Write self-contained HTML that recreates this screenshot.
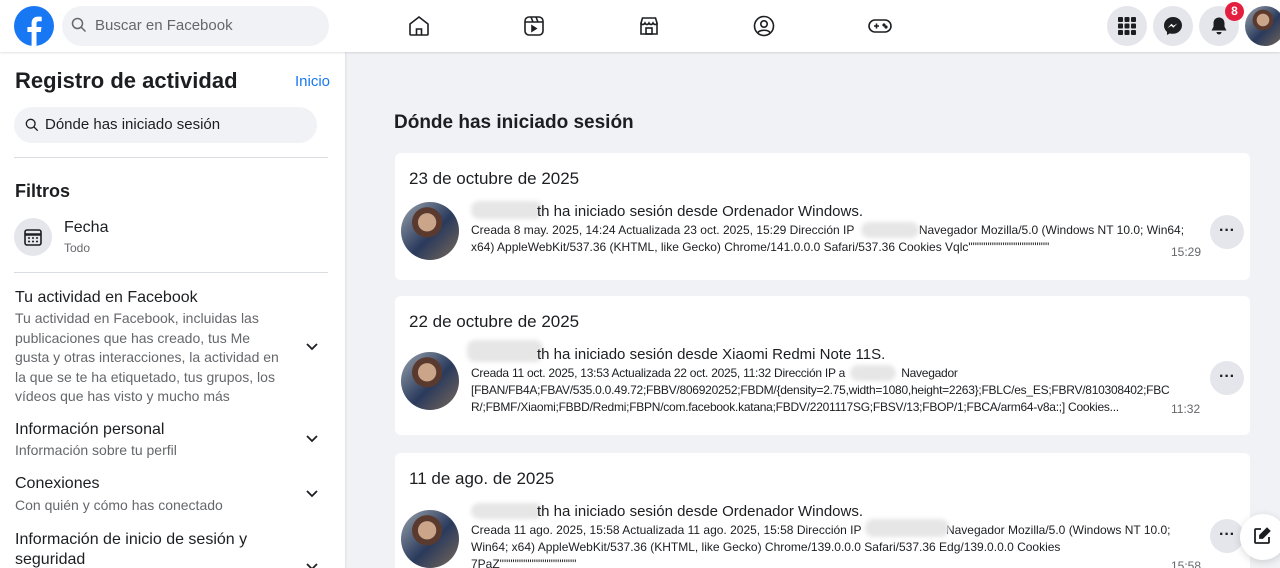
<!DOCTYPE html>
<html style="overflow:hidden;height:568px"><head><meta charset="utf-8"><style>
*{box-sizing:border-box;margin:0;padding:0}
body{width:1280px;height:568px;overflow:hidden;background:#f0f2f5;font-family:"Liberation Sans",sans-serif;color:#1c1e21;position:relative}
.a{position:absolute}
.hdr{left:0;top:0;width:1280px;height:52px;background:#fff;box-shadow:0 1px 2px rgba(0,0,0,.12);z-index:2}
.side{left:0;top:52px;width:345px;height:516px;background:#fff;box-shadow:1px 0 2px rgba(0,0,0,.08)}
.circ{border-radius:50%;background:#e4e6eb}
.card{left:395px;width:855px;background:#fff;border-radius:6px}
.av{width:58px;height:58px;border-radius:50%;background:radial-gradient(circle at 45% 35%,#caa58a 0 18%,#5a3a2e 19% 30%,transparent 31%),linear-gradient(135deg,#9aa3ad,#2a3a5c 55%,#7a6a5a);}
.blur{background:#e6e6e6;border-radius:8px;filter:blur(2px)}
.t{font-size:15px;white-space:nowrap}
.s{font-size:12px;color:#1c1e21;line-height:17px;white-space:nowrap}
.tm{font-size:12px;color:#65676b}
.dots{width:34px;height:34px;border-radius:50%;background:#e4e6eb;font-size:16px;font-weight:bold;text-align:center;line-height:32px;color:#1c1e21}
.h{font-size:16px}
.g{font-size:14px;color:#65676b;line-height:19.5px}
</style></head><body>
<div class="a hdr">
 <svg class="a" style="left:14px;top:6px" width="40" height="40" viewBox="0 0 40 40"><circle cx="20" cy="20" r="20" fill="#1877f2"/><path d="M22.5 40V26h4.3l.7-5h-5v-3.2c0-1.5.5-2.5 2.6-2.5h2.6v-4.5c-.5-.1-2-.2-3.8-.2-3.8 0-6.3 2.3-6.3 6.5V21h-4.2v5h4.2v14z" fill="#fff"/></svg>
 <div class="a" style="left:62px;top:6px;width:267px;height:40px;border-radius:20px;background:#f0f2f5"></div>
 <svg class="a" style="left:71px;top:17px" width="16" height="16" viewBox="0 0 16 16"><circle cx="6.5" cy="6.5" r="5" fill="none" stroke="#65676b" stroke-width="1.5"/><path d="M10 10l4.5 4.5" stroke="#65676b" stroke-width="1.5"/></svg>
 <div class="a" style="left:95px;top:17px;font-size:15px;color:#65676b">Buscar en Facebook</div>
 <svg class="a" style="left:407px;top:14px" width="24" height="24" viewBox="0 0 24 24" fill="none" stroke="#1c1e21" stroke-width="1.6"><path d="M3 10l9-7 9 7v10a1 1 0 0 1-1 1H4a1 1 0 0 1-1-1z"/><path d="M9.5 21v-6h5v6"/></svg>
 <svg class="a" style="left:522px;top:14px" width="24" height="24" viewBox="0 0 24 24" fill="none" stroke="#1c1e21" stroke-width="1.6"><rect x="3" y="3" width="18" height="18" rx="4"/><path d="M3 8h18M9 3l2 5M14 3l2 5"/><path d="M10 12v5l4-2.5z" fill="#1c1e21"/></svg>
 <svg class="a" style="left:637px;top:14px" width="24" height="24" viewBox="0 0 24 24" fill="none" stroke="#1c1e21" stroke-width="1.6"><path d="M4 9l1.5-5h13L20 9v11H4z"/><path d="M4 9c0 2 3 2 4 0 1 2 3 2 4 0 1 2 3 2 4 0 1 2 4 2 4 0"/><rect x="9" y="14" width="6" height="6"/></svg>
 <svg class="a" style="left:752px;top:14px" width="24" height="24" viewBox="0 0 24 24" fill="none" stroke="#1c1e21" stroke-width="1.6"><circle cx="12" cy="12" r="9.5"/><circle cx="12" cy="10" r="3.2"/><path d="M6 18.5c2-3 10-3 12 0"/></svg>
 <svg class="a" style="left:867px;top:14px" width="26" height="24" viewBox="0 0 26 24" fill="none" stroke="#1c1e21" stroke-width="1.6"><rect x="2" y="6" width="22" height="12" rx="6"/><path d="M7 12h5M9.5 9.5v5"/><circle cx="17" cy="11" r=".8" fill="#1c1e21"/><circle cx="19" cy="13" r=".8" fill="#1c1e21"/></svg>
 <div class="a circ" style="left:1107px;top:6px;width:40px;height:40px"></div>
 <svg class="a" style="left:1117px;top:16px" width="20" height="20" viewBox="0 0 20 20" fill="#1c1e21"><rect x="1" y="1" width="5" height="5" rx="1"/><rect x="7.5" y="1" width="5" height="5" rx="1"/><rect x="14" y="1" width="5" height="5" rx="1"/><rect x="1" y="7.5" width="5" height="5" rx="1"/><rect x="7.5" y="7.5" width="5" height="5" rx="1"/><rect x="14" y="7.5" width="5" height="5" rx="1"/><rect x="1" y="14" width="5" height="5" rx="1"/><rect x="7.5" y="14" width="5" height="5" rx="1"/><rect x="14" y="14" width="5" height="5" rx="1"/></svg>
 <div class="a circ" style="left:1153px;top:6px;width:40px;height:40px"></div>
 <svg class="a" style="left:1163px;top:16px" width="20" height="20" viewBox="0 0 20 20"><path d="M10 1C5 1 1 4.7 1 9.5c0 2.6 1.2 4.8 3 6.3V19l2.8-1.6c1 .3 2 .4 3.2.4 5 0 9-3.7 9-8.5S15 1 10 1z" fill="#1c1e21"/><path d="M4.5 12l4-4.3 2 2 3.8-2.2-4 4.3-2-2z" fill="#fff"/></svg>
 <div class="a circ" style="left:1199px;top:6px;width:40px;height:40px"></div>
 <svg class="a" style="left:1209px;top:16px" width="20" height="20" viewBox="0 0 20 20" fill="#1c1e21"><path d="M10 1.5c-3.3 0-5.5 2.5-5.5 5.8v3.5L2.5 14.5h15l-2-3.7V7.3c0-3.3-2.2-5.8-5.5-5.8z"/><path d="M7.5 16h5a2.5 2.5 0 0 1-5 0z"/></svg>
 <div class="a" style="left:1225px;top:2px;width:19px;height:19px;border-radius:50%;background:#e41e3f;color:#fff;font-size:12px;font-weight:bold;text-align:center;line-height:19px">8</div>
 <div class="a av" style="left:1245px;top:6px;width:40px;height:40px"></div>
</div>

<div class="a side">
 <div class="a" style="left:15px;top:16px;font-size:22px;font-weight:bold">Registro de actividad</div>
 <div class="a" style="left:295px;top:21px;font-size:15px;color:#1877f2">Inicio</div>
 <div class="a" style="left:14px;top:55px;width:303px;height:36px;border-radius:18px;background:#f0f2f5"></div>
 <svg class="a" style="left:25px;top:66px" width="14" height="14" viewBox="0 0 16 16"><circle cx="6.5" cy="6.5" r="5" fill="none" stroke="#1c1e21" stroke-width="1.5"/><path d="M10 10l4.5 4.5" stroke="#1c1e21" stroke-width="1.5"/></svg>
 <div class="a" style="left:45px;top:64px;font-size:15px">Dónde has iniciado sesión</div>
 <div class="a" style="left:14px;top:105px;width:314px;height:1px;background:#dadde1"></div>
 <div class="a" style="left:15px;top:129px;font-size:18px;font-weight:bold">Filtros</div>
 <div class="a circ" style="left:14px;top:166px;width:38px;height:38px"></div>
 <svg class="a" style="left:23px;top:175px" width="20" height="20" viewBox="0 0 20 20" fill="none" stroke="#1c1e21" stroke-width="1.6"><rect x="2" y="3" width="16" height="15" rx="2"/><path d="M2 7.5h16" stroke-width="2.5"/><path d="M5 11h2M9 11h2M13 11h2M5 14.5h2M9 14.5h2M13 14.5h2"/></svg>
 <div class="a" style="left:64px;top:167px;font-size:16px">Fecha</div>
 <div class="a" style="left:64px;top:189px;font-size:12px;color:#65676b">Todo</div>
 <div class="a" style="left:14px;top:220px;width:314px;height:1px;background:#dadde1"></div>
 <div class="a h" style="left:15px;top:237px">Tu actividad en Facebook</div>
 <div class="a g" style="left:15px;top:257px;width:270px">Tu actividad en Facebook, incluidas las publicaciones que has creado, tus Me gusta y otras interacciones, la actividad en la que se te ha etiquetado, tus grupos, los vídeos que has visto y mucho más</div>
 <div class="a h" style="left:15px;top:369px">Información personal</div>
 <div class="a g" style="left:15px;top:389px">Información sobre tu perfil</div>
 <div class="a h" style="left:15px;top:423px">Conexiones</div>
 <div class="a g" style="left:15px;top:444px">Con quién y cómo has conectado</div>
 <div class="a h" style="left:15px;top:478px;line-height:20px;width:270px">Información de inicio de sesión y seguridad</div>
 <svg class="a" style="left:305px;top:290px" width="14" height="10" viewBox="0 0 14 10"><path d="M2 2l5 5 5-5" fill="none" stroke="#1c1e21" stroke-width="1.8"/></svg>
 <svg class="a" style="left:305px;top:382px" width="14" height="10" viewBox="0 0 14 10"><path d="M2 2l5 5 5-5" fill="none" stroke="#1c1e21" stroke-width="1.8"/></svg>
 <svg class="a" style="left:305px;top:437px" width="14" height="10" viewBox="0 0 14 10"><path d="M2 2l5 5 5-5" fill="none" stroke="#1c1e21" stroke-width="1.8"/></svg>
 <svg class="a" style="left:305px;top:510px" width="14" height="10" viewBox="0 0 14 10"><path d="M2 2l5 5 5-5" fill="none" stroke="#1c1e21" stroke-width="1.8"/></svg>
</div>

<div class="a" style="left:394px;top:112px;font-size:19px;font-weight:bold">Dónde has iniciado sesión</div>

<div class="a card" style="top:153px;height:127px">
 <div class="a" style="left:14px;top:16px;font-size:17px">23 de octubre de 2025</div>
 <div class="a av" style="left:6px;top:49px"></div>
 <div class="a blur" style="left:76px;top:48px;width:72px;height:18px"></div>
 <div class="a t" style="left:142px;top:50px">th ha iniciado sesión desde Ordenador Windows.</div>
 <div class="a s" style="left:76px;top:69px">Creada 8 may. 2025, 14:24 Actualizada 23 oct. 2025, 15:29 Dirección IP <span style="display:inline-block;width:58px"></span> Navegador Mozilla/5.0 (Windows NT 10.0; Win64;<br>x64) AppleWebKit/537.36 (KHTML, like Gecko) Chrome/141.0.0.0 Safari/537.36 Cookies Vqlc"""""""""""""""""""</div>
 <div class="a blur" style="left:466px;top:69px;width:58px;height:16px"></div>
 <div class="a tm" style="left:776px;top:92px">15:29</div>
 <div class="a dots" style="left:815px;top:62px">···</div>
</div>

<div class="a card" style="top:296px;height:139px">
 <div class="a" style="left:14px;top:16px;font-size:17px">22 de octubre de 2025</div>
 <div class="a av" style="left:6px;top:56px"></div>
 <div class="a blur" style="left:72px;top:44px;width:76px;height:22px"></div>
 <div class="a t" style="left:142px;top:50px">th ha iniciado sesión desde Xiaomi Redmi Note 11S.</div>
 <div class="a s" style="left:76px;top:69px;letter-spacing:-0.25px">Creada 11 oct. 2025, 13:53 Actualizada 22 oct. 2025, 11:32 Dirección IP a <span style="display:inline-block;width:50px"></span> Navegador<br>[FBAN/FB4A;FBAV/535.0.0.49.72;FBBV/806920252;FBDM/{density=2.75,width=1080,height=2263};FBLC/es_ES;FBRV/810308402;FBC<br>R/;FBMF/Xiaomi;FBBD/Redmi;FBPN/com.facebook.katana;FBDV/2201117SG;FBSV/13;FBOP/1;FBCA/arm64-v8a:;] Cookies...</div>
 <div class="a blur" style="left:455px;top:69px;width:46px;height:16px"></div>
 <div class="a tm" style="left:776px;top:106px">11:32</div>
 <div class="a dots" style="left:815px;top:65px">···</div>
</div>

<div class="a card" style="top:453px;height:130px">
 <div class="a" style="left:14px;top:16px;font-size:17px">11 de ago. de 2025</div>
 <div class="a av" style="left:6px;top:57px"></div>
 <div class="a blur" style="left:76px;top:50px;width:72px;height:16px"></div>
 <div class="a t" style="left:142px;top:50px">th ha iniciado sesión desde Ordenador Windows.</div>
 <div class="a s" style="left:76px;top:69px">Creada 11 ago. 2025, 15:58 Actualizada 11 ago. 2025, 15:58 Dirección IP <span style="display:inline-block;width:78px"></span> Navegador Mozilla/5.0 (Windows NT 10.0;<br>Win64; x64) AppleWebKit/537.36 (KHTML, like Gecko) Chrome/139.0.0.0 Safari/537.36 Edg/139.0.0.0 Cookies<br>7PaZ""""""""""""""""""</div>
 <div class="a blur" style="left:470px;top:66px;width:84px;height:18px"></div>
 <div class="a tm" style="left:776px;top:106px">15:58</div>
 <div class="a dots" style="left:815px;top:66px">···</div>
</div>

<div class="a" style="left:1240px;top:514px;width:46px;height:46px;border-radius:50%;background:#fff;box-shadow:0 2px 8px rgba(0,0,0,.15)"></div>
<svg class="a" style="left:1252px;top:526px" width="20" height="20" viewBox="0 0 20 20" fill="none" stroke="#1c1e21" stroke-width="1.8"><path d="M9 3H4a1 1 0 0 0-1 1v12a1 1 0 0 0 1 1h12a1 1 0 0 0 1-1v-5"/><path d="M15 2.5l2.5 2.5-7 7H8V9.5z" fill="#1c1e21"/></svg>
</body></html>
